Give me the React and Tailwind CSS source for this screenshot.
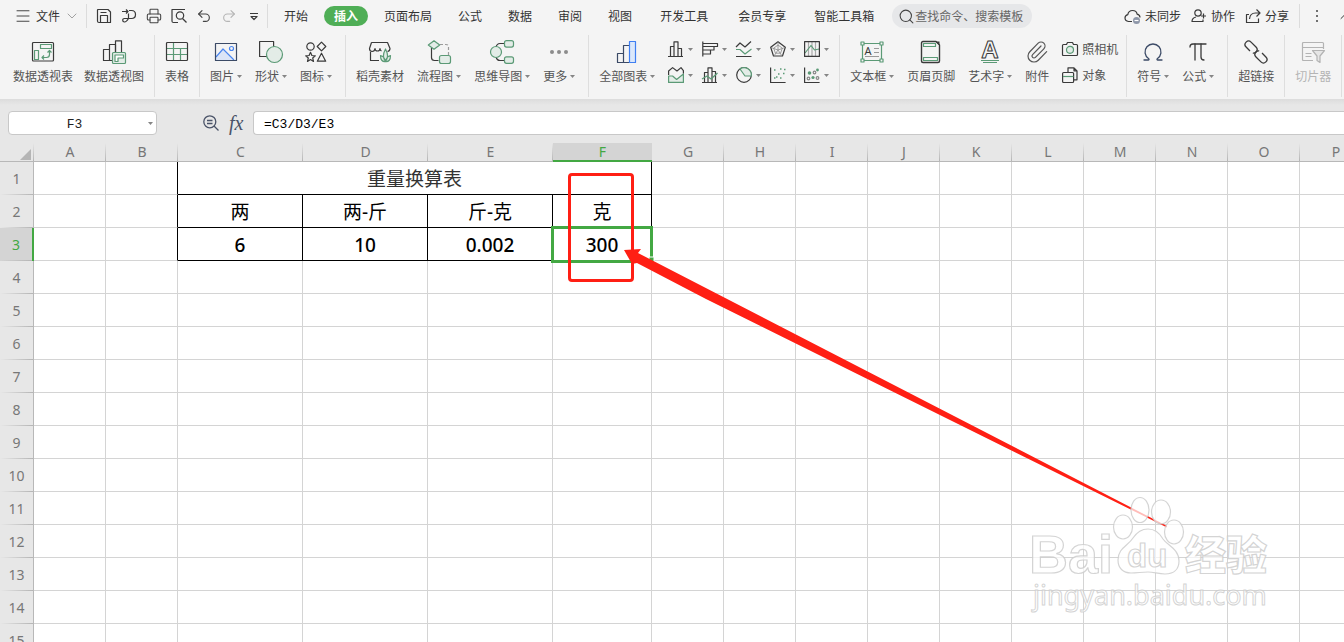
import React, { useState } from 'react';
import { Paperclip, Search, Menu, ChevronDown, ChevronUp, Printer, Undo2, Redo2, Omega, Pi } from 'lucide-react';

const INK = '#3a3a3a';
const GREEN = '#5b9a76';
const SOFT = '#e3ece7';
const NAVY = '#3b4a66';

function Icon({ size = 24, children }) {
  return (
    <svg width={size} height={size} viewBox={`0 0 ${size} ${size}`} fill="none" stroke={INK} strokeWidth="1.2" strokeLinejoin="round" aria-hidden="true" className="shrink-0 overflow-visible">
      {children}
    </svg>
  );
}

function Caret() {
  return (
    <svg width="5" height="3" viewBox="0 0 5 3" aria-hidden="true" className="shrink-0">
      <path d="M0 0h5L2.500 3z" fill="#858585" />
    </svg>
  );
}

/* ---------- large ribbon icons ---------- */

const PivotTableIcon = () => (
  <Icon>
    <rect x="1.500" y="2.500" width="21" height="18.500" rx="1" />
    <rect x="9.500" y="4.500" width="11" height="4" stroke={GREEN} />
    <rect x="3.500" y="10.500" width="4" height="9" stroke={GREEN} />
    <path d="M11 17.500h4.500q3 0 3-3v-4M13 15.500l-2 2 2 2M16.500 12.500l2-2 2 2" stroke={GREEN} />
  </Icon>
);

const PivotChartIcon = () => (
  <Icon>
    <path d="M10 20.500H1.500v-11H7.500M7.500 20.500v-16h5.500M13.500 12V.8h6V12" />
    <path d="M13.500 4.500v8" />
    <rect x="10.500" y="12.500" width="13" height="11" rx="1" stroke={GREEN} fill={SOFT} />
    <path d="M13 21.500v-6.500h8.500v3H16v3.500z" stroke={GREEN} fill="#fff" />
  </Icon>
);

const TableIcon = () => (
  <Icon>
    <path d="M8.500 3v17.500M15.500 8.500v12M2 8.500h20M2 14.500h20" stroke={GREEN} />
    <rect x="1.500" y="2.500" width="21" height="18" rx="1" />
  </Icon>
);

const PictureIcon = () => (
  <Icon>
    <path d="M2 18l7-8 10.500 10H2z" fill="#dbe5f7" stroke="none" />
    <path d="M2 17l7-8L20 20" stroke="#4a86f0" />
    <circle cx="17.500" cy="8.500" r="2" stroke="#4a86f0" />
    <rect x="1.500" y="3.500" width="21" height="17" stroke={NAVY} />
  </Icon>
);

const ShapesIcon = () => (
  <Icon>
    <rect x=".6" y="1.500" width="14" height="15" />
    <circle cx="15.500" cy="14.500" r="8" stroke={GREEN} fill={SOFT} />
  </Icon>
);

const GlyphsIcon = () => (
  <Icon>
    <circle cx="6.500" cy="6.500" r="3.700" />
    <path d="M17.500 2.200l4.300 4.300-4.300 4.300-4.300-4.300z" />
    <path d="M6.500 12.300l1.400 3.200 3.400.3-2.600 2.200.8 3.400-3-1.800-3 1.800.8-3.400-2.600-2.200 3.400-.3z" />
    <path d="M17.500 13.200l4.200 8h-8.400z" />
  </Icon>
);

const StoreIcon = () => (
  <Icon>
    <path d="M11 20.500H2.500V12M3.500 2.500h16l2.500 6q0 2.500-2.500 3M3.500 2.500l-2 6q0 3 2.600 3T7 8.500q0 2.500 2.500 2.500T12 8.500q0 2 1.500 2.300" />
    <path d="M17.500 21.500q-4-5 0-12.500 4 7.500 0 12.500zM17.500 21.500q-5 .5-5-6 4 1 5 6zM17.500 21.500q5 .5 5-6-4 1-5 6z" stroke={GREEN} fill={SOFT} />
  </Icon>
);

const FlowIcon = () => (
  <Icon>
    <path d="M4.500 8v9.500q0 3 3 3h4" />
    <path d="M13 4.500h6q2.500 0 2.500 2.500v8" stroke="#9b9b9b" strokeDasharray="3 2" />
    <path d="M7 .8l5.700 4.200L7 9.200 1.300 5z" stroke={GREEN} fill={SOFT} />
    <rect x="12.500" y="15.500" width="11" height="8" rx="2" stroke={GREEN} fill={SOFT} />
  </Icon>
);

const MindIcon = () => (
  <Icon>
    <path d="M6 7q1-3.500 4-3.500h4M6 17q1 3.500 4 3.500h4" />
    <circle cx="6" cy="12" r="5.500" stroke={GREEN} fill={SOFT} />
    <rect x="14.500" y=".6" width="9" height="6.500" rx="2" stroke={GREEN} fill={SOFT} />
    <rect x="14.500" y="16.800" width="9" height="6.500" rx="2" stroke={GREEN} fill={SOFT} />
  </Icon>
);

const MoreIcon = () => (
  <Icon>
    {[5, 12, 19].map((cx) => (
      <circle key={cx} cx={cx} cy="12" r="2" fill="#8c8c8c" stroke="none" />
    ))}
  </Icon>
);

const AllChartsIcon = () => (
  <Icon>
    <path d="M2.500 22.500v-9h5.500M8.500 22.500v-17h5.500M2 22.500h12" stroke={NAVY} />
    <rect x="14.500" y="1.500" width="6" height="21" stroke="#3f7ff2" fill="#dbe8fb" />
  </Icon>
);

const TextBoxIcon = () => (
  <Icon>
    <rect x="2.500" y="3.500" width="19" height="17" stroke={GREEN} />
    {[[1, 2], [20, 2], [1, 19], [20, 19]].map(([x, y]) => (
      <rect key={`${x}-${y}`} x={x} y={y} width="3" height="3" fill="#f4f4f4" stroke={GREEN} />
    ))}
    <text x="4.500" y="15" fontSize="11" fill={INK} stroke="none" fontFamily="Noto Sans, sans-serif">A</text>
    <path d="M14 8.500h5M14 12.500h5M5 16.500h14" stroke="#999" />
  </Icon>
);

const HeaderFooterIcon = () => (
  <Icon>
    <path d="M4 1.500h13l3.500 3.500v16q0 1.500-1.500 1.500H4q-1.500 0-1.500-1.500V3Q2.500 1.500 4 1.500z" strokeWidth="1.400" />
    <path d="M16.500 1.500l4 4v-4z" fill={INK} stroke="none" />
    <rect x="4.500" y="3.500" width="12" height="3" stroke={GREEN} />
    <rect x="4.500" y="17.500" width="14" height="3" stroke={GREEN} />
  </Icon>
);

const WordArtIcon = () => (
  <Icon>
    <text x="12" y="18" textAnchor="middle" fontSize="24" fontWeight="700" fill="#f4f4f4" strokeWidth="1" fontFamily="Liberation Sans, sans-serif">A</text>
    <path d="M3 20.500h18M5 22.500h14" stroke={GREEN} />
  </Icon>
);

const LinkIcon = () => (
  <Icon>
    <g transform="rotate(45 12 12)" strokeWidth="1.300">
      <path d="M7 15.500H1.500q-3.500 0-3.500-3.500t3.500-3.500h7q3.500 0 3.500 3.500 0 2-1.500 3" />
      <path d="M17 8.500h5.500q3.500 0 3.500 3.500t-3.500 3.500h-7q-3.500 0-3.500-3.500 0-2 1.500-3" />
    </g>
  </Icon>
);

const SlicerIcon = () => (
  <Icon>
    <g stroke="#b3b3b3">
      <path d="M12 20.500H2.500q-1 0-1-1v-16q0-1 1-1h19q1 0 1 1V9M1.500 7.500h21M4.500 13.500h6M4.500 16.500h6" />
      <path d="M11.500 10.500h12l-4.500 5.500v6.500l-3-2V16z" fill="#e6e6e6" />
    </g>
  </Icon>
);

/* ---------- small chart icons ---------- */

const chartIcons = [
  ['柱形图', <path d="M0 15.500h15M2.500 15V5.500h3.500M6 15V.8h4V15M10 7.500h3.500V15" />],
  ['条形图', <path d="M.8.500v15M1 2.500h14.500v3H1M12 5.500v3.500H1M8.500 9v4H1" />],
  ['折线图', <g><path d="M0 6l4-4 5 4 6-5.500M0 15.500h15.500" /><path d="M0 8.500h4l5 4.500 6.500-5" stroke={GREEN} /></g>],
  ['雷达图', <g><path d="M8 .8l7.300 5.500-2.800 8.700h-9L.7 6.300z" /><path d="M8 4l4.300 3.200-1.700 5H5.400l-1.700-5zM8 1v8M15 6.500L8 9M12 15L8 9M4 15l4-6M1 6.500L8 9" stroke="#888" strokeWidth=".8" /></g>],
  ['股价图', <g><path d="M4.500 1v14M8 1v14M11.500 1v14" stroke="#aaa" /><path d="M1 12l6-7.500 3.500 4.500 4.500-1" stroke={GREEN} /><rect x=".6" y=".6" width="14.800" height="14.800" /></g>],
  ['面积图', <g><path d="M.6 9h4l4 3.500 6.800-5.500v8.400H.6z" stroke={GREEN} fill={SOFT} /><path d="M.6 8V4l4-3.400L9 4l4-3.400 2.400 3v3" /></g>],
  ['组合图', <g><path d="M0 15.500h15M2.500 15V5.500h3.500M6 15V.8h4V15M10 4.500h3.500V15" /><path d="M0 12l5-3 4 3 6.500-6" stroke={GREEN} /></g>],
  ['饼图', <g><circle cx="8" cy="8" r="7.300" /><path d="M4 2a7.300 7.300 0 0 1 11.300 7H9z" fill={SOFT} stroke={GREEN} /></g>],
  ['散点图', <g><path d="M.6.500v15h15" /><path d="M4 3h1.500M10 2h1.500M14 2.500h1.500M4 11h1.500M8 7h1.500M10 11h1.500M13 6.500h1.500M6 10h1.500" stroke={GREEN} strokeWidth="1.600" /></g>],
  ['气泡图', <g><path d="M.6.500v15h15" /><circle cx="5.500" cy="6" r="1.800" fill={GREEN} stroke="none" /><circle cx="13.500" cy="3" r="1.400" fill={GREEN} stroke="none" /><circle cx="9" cy="10.500" r="1.600" fill={GREEN} stroke="none" /><circle cx="10.500" cy="5.500" r="1.300" stroke="#888" /><circle cx="4.500" cy="11.500" r="1.300" stroke="#888" /><circle cx="13.500" cy="11" r="1.300" stroke="#888" /></g>],
];

function RibbonButton({ icon, label, caret, disabled }) {
  return (
    <button type="button" disabled={disabled} className={`flex shrink-0 flex-col items-center gap-1 ${disabled ? 'text-[#b5b5b5]' : ''}`}>
      {icon}
      <span className="flex items-center gap-[3px] leading-4 whitespace-nowrap">
        {label}
        {caret && <Caret />}
      </span>
    </button>
  );
}

function RibbonGroup({ children, className = 'gap-[13px] px-[10px]' }) {
  return <div className={`flex shrink-0 items-start border-r border-[#dedede] pt-[5px] ${className}`}>{children}</div>;
}

const Divider = ({ className = '' }) => <span className={`h-6 w-px shrink-0 bg-[#dcdcdc] ${className}`} />;

function TabBar() {
  const [tab, setTab] = useState('插入');
  const tabs = ['开始', '插入', '页面布局', '公式', '数据', '审阅', '视图', '开发工具', '会员专享', '智能工具箱'];

  return (
    <div className="flex h-8 items-center whitespace-nowrap text-[#333]">
      <button type="button" className="ml-[14px] flex items-center gap-1">
        <Menu size={18} strokeWidth={1.2} />
        文件
        <ChevronDown size={16} strokeWidth={1} className="text-[#777]" />
      </button>
      <Divider className="ml-[6px]" />

      <div className="ml-[9px] flex items-center gap-[9px] text-[#444]">
        <button type="button" aria-label="保存">
          <Icon size={16}>
            <path d="M2 1.500h10l2.500 2.500v10.500H3q-1.500 0-1.500-1.500V2zM4.500 14.500v-7h7v7M4.500 4.500h6" />
          </Icon>
        </button>
        <button type="button" aria-label="输出为PDF">
          <Icon size={16}>
            <path d="M1 3.500h6M5 1.500l2 2-2 2M8 2.500h2.500q4 0 4 4t-4 4H3.500q-1.800 0-1.800 1.700T3.500 14 7.500 10.500V5.500" />
          </Icon>
        </button>
        <button type="button" aria-label="打印"><Printer size={16} strokeWidth={1.6} /></button>
        <button type="button" aria-label="打印预览">
          <Icon size={16}>
            <path d="M7 14.500H2.500q-1.500 0-1.500-1.500V1.500h13M1 1.500v12" />
            <circle cx="9" cy="7.500" r="3.700" />
            <path d="M11.500 10.500l4 4" />
          </Icon>
        </button>
        <button type="button" aria-label="撤销"><Undo2 size={16} strokeWidth={1.7} /></button>
        <button type="button" aria-label="恢复" className="text-[#b5b5b5]"><Redo2 size={16} strokeWidth={1.7} /></button>
        <button type="button" aria-label="自定义快速访问工具栏">
          <Icon size={16}>
            <path d="M4 5.500h8M5 8.500l3 3 3-3z" />
          </Icon>
        </button>
      </div>
      <Divider className="ml-[5px]" />

      <nav className="ml-[3px] flex items-center">
        {tabs.map((name) => (
          <button
            key={name}
            type="button"
            onClick={() => setTab(name)}
            className={`h-5 rounded-full leading-5 ${
              name === tab
                ? 'mx-[3px] bg-[#4fae56] px-[10px] font-bold text-white'
                : name.length === 4 && name !== '页面布局'
                  ? 'px-[15px]'
                  : 'px-[13px]'
            }`}
          >
            {name}
          </button>
        ))}
      </nav>

      <label className="ml-[5px] flex h-6 w-[140px] shrink-0 items-center rounded-full bg-[#e6e7e9] pl-[6px]">
        <Search size={17} strokeWidth={1.5} className="shrink-0 text-[#444]" />
        <input type="text" aria-label="搜索" placeholder="查找命令、搜索模板" className="w-full min-w-0 bg-transparent outline-none placeholder:text-[#666]" />
      </label>

      <div className="ml-auto flex shrink-0 items-center gap-[10px]">
        <button type="button" className="flex items-center gap-1">
          <Icon size={17}>
            <path d="M8 13.500H4.500q-3.500-.5-3.500-3.500 0-2.700 2.800-3.400Q4.500 2.500 8.500 2.500q4 0 4.600 3.700Q16 7 16 9.500" />
            <circle cx="12.500" cy="12.500" r="3.500" fill="#8d96a8" stroke="none" />
            <path d="M10.500 12.500h4" stroke="#fff" />
          </Icon>
          未同步
        </button>
        <button type="button" className="flex items-center gap-1">
          <Icon size={16}>
            <circle cx="7" cy="5" r="3.200" />
            <path d="M5 9q-4 1-4 4.500h11v-2M12.500 5.500v5M10 8h5" />
          </Icon>
          协作
        </button>
        <button type="button" className="flex items-center gap-1">
          <Icon size={16}>
            <path d="M4 6.500H1.500v8h12v-4M4.500 11q.5-6 6-6h4M11.500 1.500L15 5l-3.500 3.500" />
          </Icon>
          分享
        </button>
        <Divider />
        <button type="button" aria-label="更多选项">
          <Icon size={16}>
            {[3, 8, 13].map((cy) => (
              <circle key={cy} cx="7" cy={cy} r="1" fill="#444" stroke="none" />
            ))}
          </Icon>
        </button>
        <button type="button" aria-label="收起功能区" className="-mr-3"><ChevronUp size={20} strokeWidth={1.2} /></button>
      </div>
    </div>
  );
}

function Ribbon() {
  return (
    <div className="mt-[3px] flex h-[62px] overflow-hidden text-[#555]">
      <RibbonGroup className="gap-[11px] pr-[10px] pl-[13px]">
        <RibbonButton icon={<PivotTableIcon />} label="数据透视表" />
        <RibbonButton icon={<PivotChartIcon />} label="数据透视图" />
      </RibbonGroup>
      <RibbonGroup>
        <RibbonButton icon={<TableIcon />} label="表格" />
      </RibbonGroup>
      <RibbonGroup className="gap-[13px] pr-[13px] pl-[10px]">
        <RibbonButton icon={<PictureIcon />} label="图片" caret />
        <RibbonButton icon={<ShapesIcon />} label="形状" caret />
        <RibbonButton icon={<GlyphsIcon />} label="图标" caret />
      </RibbonGroup>
      <RibbonGroup className="gap-[13px] pr-[13px] pl-[10px]">
        <RibbonButton icon={<StoreIcon />} label="稻壳素材" />
        <RibbonButton icon={<FlowIcon />} label="流程图" caret />
        <RibbonButton icon={<MindIcon />} label="思维导图" caret />
        <RibbonButton icon={<MoreIcon />} label="更多" caret />
      </RibbonGroup>
      <RibbonGroup>
        <RibbonButton icon={<AllChartsIcon />} label="全部图表" caret />
        <div className="mt-[1px] grid grid-cols-5 gap-x-[9px] gap-y-[10px]">
          {chartIcons.map(([name, drawing]) => (
            <button key={name} type="button" aria-label={name} className="flex items-center gap-1">
              <Icon size={16}>{drawing}</Icon>
              <Caret />
            </button>
          ))}
        </div>
      </RibbonGroup>
      <RibbonGroup className="gap-[13px] pr-2 pl-[10px]">
        <RibbonButton icon={<TextBoxIcon />} label="文本框" caret />
        <RibbonButton icon={<HeaderFooterIcon />} label="页眉页脚" />
        <RibbonButton icon={<WordArtIcon />} label="艺术字" caret />
        <RibbonButton icon={<Paperclip size={24} strokeWidth={1.2} />} label="附件" />
        <div className="mt-[1px] flex flex-col gap-[10px] leading-4">
          <button type="button" className="flex items-center gap-1">
            <Icon size={16}>
              <path d="M1.500 3.500h3l1-2h5l1 2h3q1 0 1 1v9q0 1-1 1h-13q-1 0-1-1v-9q0-1 1-1z" />
              <circle cx="8" cy="8.800" r="3.500" stroke={GREEN} fill={SOFT} />
            </Icon>
            照相机
          </button>
          <button type="button" className="flex items-center gap-1">
            <Icon size={16}>
              <path d="M6 5V.8h6l3 3v9h-3.500M12 .8v3h3" />
              <rect x=".6" y="5.500" width="11" height="10" rx="1" />
              <path d="M1 9.500h10.500" stroke={GREEN} />
            </Icon>
            对象
          </button>
        </div>
      </RibbonGroup>
      <RibbonGroup className="gap-[13px] pr-[13px] pl-[10px]">
        <RibbonButton icon={<Omega size={24} strokeWidth={1.3} color={NAVY} />} label="符号" caret />
        <RibbonButton icon={<Pi size={24} strokeWidth={1.3} color={INK} />} label="公式" caret />
      </RibbonGroup>
      <RibbonGroup>
        <RibbonButton icon={<LinkIcon />} label="超链接" />
      </RibbonGroup>
      <RibbonGroup>
        <RibbonButton icon={<SlicerIcon />} label="切片器" disabled />
      </RibbonGroup>
    </div>
  );
}

function FormulaBar() {
  return (
    <div className="flex h-11 shrink-0 items-start bg-[linear-gradient(#dcdcdc,#e7e7e7_6px)] pt-3">
      <div className="ml-2 flex h-6 w-[149px] shrink-0 items-center rounded border border-[#c8c8c8] bg-white pr-[3px]">
        <input aria-label="名称框" defaultValue="F3" className="h-full w-full min-w-0 pt-[2px] pr-5 pl-3 text-center font-['Liberation_Mono',monospace] text-[13px] text-[#222] outline-none" />
        <Caret />
      </div>
      <button type="button" aria-label="浏览公式结果" className="mt-1 ml-[46px]">
        <svg width="16" height="16" viewBox="0 0 16 16" fill="none" stroke="#4a5368" strokeWidth="1.300" aria-hidden="true">
          <circle cx="6.800" cy="6.800" r="6" />
          <path d="M11 11l4.500 4.500M4 5.500h5.500M4 8.500h5.500" />
        </svg>
      </button>
      <button type="button" className="ml-[10px] w-4 text-left font-['Liberation_Serif',serif] text-xl leading-6 text-[#4a5368] italic">fx</button>
      <input aria-label="编辑栏" defaultValue="=C3/D3/E3" className="ml-2 h-6 flex-1 rounded-l border border-r-0 border-[#c8c8c8] bg-white px-[10px] pt-[2px] font-['Liberation_Mono',monospace] text-[13px] text-black outline-none" />
    </div>
  );
}

const columns = 'ABCDEFGHIJKLMNOP'.split('');
const wide = { C: 125, D: 125, E: 125, F: 99 };
const data = {
  2: { C: '两', D: '两-斤', E: '斤-克', F: '克' },
  3: { C: '6', D: '10', E: '0.002', F: '300' },
};

function GridCell({ row, col }) {
  const value = data[row]?.[col];
  if (value) {
    return <td className={`border-r border-b border-black p-0 pt-[2px] text-center text-[19px] leading-7 text-black ${row === 3 ? 'font-medium' : ''}`}>{value}</td>;
  }
  // column B carries the left edge of the bordered block
  const edge = col === 'B' && row <= 3 ? 'border-r-black' : 'border-r-[#d4d4d4]';
  return <td className={`border-r border-b border-b-[#d4d4d4] p-0 ${edge}`} />;
}

function Sheet() {
  return (
    <div className="relative min-h-0 flex-1 overflow-hidden bg-white">
      <table className="w-[1372px] table-fixed border-separate border-spacing-0 font-['Noto_Sans','Noto_Sans_CJK_SC',sans-serif]">
        <colgroup>
          <col style={{ width: 34 }} />
          {columns.map((c) => (
            <col key={c} style={{ width: wide[c] || 72 }} />
          ))}
        </colgroup>
        <thead>
          <tr className="h-[19px] text-sm leading-[18px] text-[#777]">
            <th aria-label="全选" className="border-b border-[#b8b8b8] bg-[#e7e7e7] bg-[linear-gradient(transparent,#b5b5b5)] bg-[length:1px_100%] bg-right bg-no-repeat p-0">
              <svg width="11" height="11" viewBox="0 0 11 11" aria-hidden="true" className="mt-1 mr-[3px] ml-auto">
                <path d="M11 0v11H0z" fill="#b5b5b5" />
              </svg>
            </th>
            {columns.map((c) =>
              c === 'F' ? (
                <th key={c} className="border-b-2 border-[#43a843] bg-[#d4d4d4] p-0 leading-[17px] font-normal text-[#43a843]">{c}</th>
              ) : (
                <th key={c} className="border-b border-[#b8b8b8] bg-[#e7e7e7] bg-[linear-gradient(transparent,#b5b5b5)] bg-[length:1px_100%] bg-right bg-no-repeat p-0 font-normal">{c}</th>
              )
            )}
          </tr>
        </thead>
        <tbody>
          {Array.from({ length: 15 }, (_, i) => i + 1).map((row) => (
            <tr key={row} className="h-[33px]">
              <th
                className={`bg-[linear-gradient(to_right,transparent,#b5b5b5)] bg-[length:100%_1px] bg-bottom bg-no-repeat p-0 text-sm font-normal ${
                  row === 3 ? 'border-r-2 border-[#43a843] bg-[#d4d4d4] text-[#43a843]' : 'border-r border-[#b8b8b8] bg-[#e7e7e7] text-[#777]'
                }`}
              >
                {row}
              </th>
              {row === 1
                ? columns.filter((c) => !'DEF'.includes(c)).map((c) =>
                    c === 'C' ? (
                      <td key={c} colSpan={4} className="border-r border-b border-black p-0 pt-[2px] text-center text-[19px] leading-7 text-[#333]">重量换算表</td>
                    ) : (
                      <GridCell key={c} row={row} col={c} />
                    )
                  )
                : columns.map((c) => <GridCell key={c} row={row} col={c} />)}
            </tr>
          ))}
        </tbody>
      </table>

      {/* active cell and the drawn annotations */}
      <div className="pointer-events-none absolute top-[83px] left-[551px] h-[37px] w-[102px] border-[3px] border-[#43a843]" />
      <div className="pointer-events-none absolute top-[30px] left-[568px] h-[109px] w-[66px] rounded border-[3px] border-[#ff1f14]" />
      <svg width="560" height="300" viewBox="620 100 560 300" className="pointer-events-none absolute top-[100px] left-[620px]" aria-hidden="true">
        <path d="M649 114h5v6h-5z" fill="#43a843" stroke="#fff" />
        <path d="M624 107l17-1-3 4 529 273v1.500L706 156l-69-36-5 1z" fill="#ff1f14" />
      </svg>
      <Watermark />
    </div>
  );
}

function Watermark() {
  return (
    <svg
      width="250"
      height="124"
      viewBox="0 0 250 124"
      aria-hidden="true"
      className="pointer-events-none absolute top-[352px] left-[1025px] overflow-visible"
      fill="#fff"
      fillOpacity=".7"
      stroke="#c9c9c9"
      strokeOpacity=".8"
      strokeWidth="1.200"
    >
      <ellipse cx="98" cy="32" rx="9.500" ry="12" />
      <ellipse cx="115" cy="15" rx="9" ry="12.500" />
      <ellipse cx="136" cy="17" rx="9.500" ry="12" />
      <ellipse cx="149" cy="37" rx="9.500" ry="12" />
      <path d="M123 34c7 0 11 3 15 10 4 6 16 10 16 22 0 9-6 13-14 13-7 0-11-2-17-2s-11 1-17 1c-8 0-13-5-13-13 0-12 10-14 15-22 4-6 8-9 15-9z" />
      <text x="4" y="78" fontSize="54" fontWeight="700" fontFamily="Liberation Sans, sans-serif">Bai</text>
      <text x="102" y="72" fontSize="33" fontWeight="700" fontFamily="Liberation Sans, sans-serif">du</text>
      <text x="160" y="75" fontSize="41" fontWeight="900" fontFamily="Noto Sans CJK SC, sans-serif">经验</text>
      <text x="8" y="110" fontSize="27" strokeWidth="1" fontFamily="Noto Sans, sans-serif">jingyan.baidu.com</text>
    </svg>
  );
}

export default function App() {
  return (
    <div className="flex h-screen flex-col overflow-hidden bg-[#e7e7e7] font-['Noto_Sans_CJK_SC',sans-serif] text-xs">
      <header className="h-[99px] shrink-0 bg-[#f4f4f4]">
        <TabBar />
        <Ribbon />
      </header>
      <FormulaBar />
      <Sheet />
    </div>
  );
}
